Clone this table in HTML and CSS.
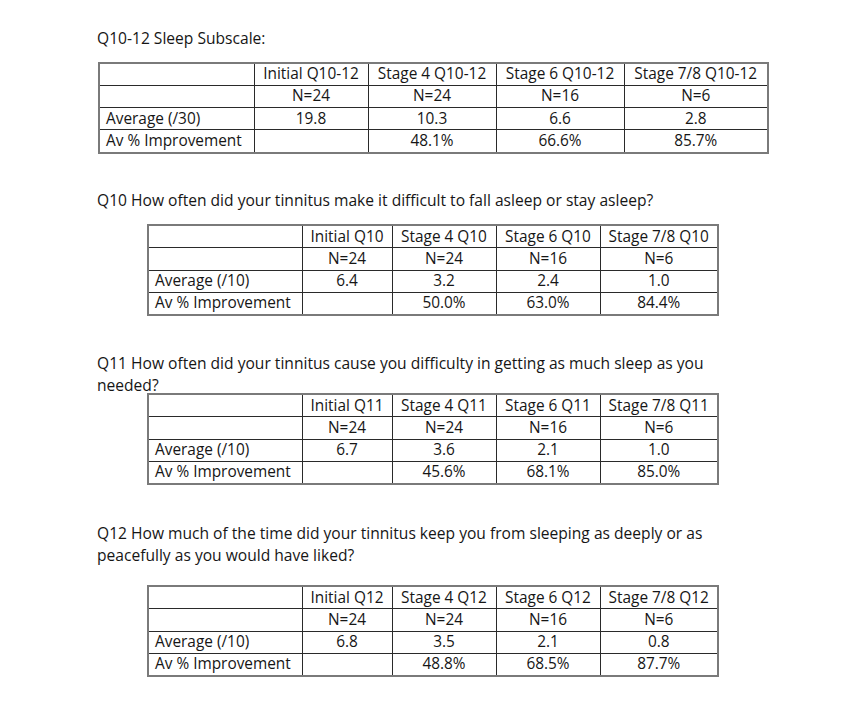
FILE: index.html
```html
<!DOCTYPE html>
<html lang="en">
<head>
<meta charset="utf-8">
<title>Sleep Subscale</title>
<link rel="stylesheet" href="styles.css">
</head>
<body>
<main class="doc">
  <p class="heading h-first">Q10-12 Sleep Subscale:</p>
  <table class="grid t-wide">
    <colgroup><col class="c1"><col class="c2"><col class="c3"><col class="c4"><col class="c5"></colgroup>
    <tr><td></td><td>Initial Q10-12</td><td>Stage 4 Q10-12</td><td>Stage 6 Q10-12</td><td>Stage 7/8 Q10-12</td></tr>
    <tr><td></td><td>N=24</td><td>N=24</td><td>N=16</td><td>N=6</td></tr>
    <tr><td class="lbl">Average (/30)</td><td>19.8</td><td>10.3</td><td>6.6</td><td>2.8</td></tr>
    <tr><td class="lbl">Av % Improvement</td><td></td><td>48.1%</td><td>66.6%</td><td>85.7%</td></tr>
  </table>

  <p class="heading h-q10">Q10 How often did your tinnitus make it difficult to fall asleep or stay asleep?</p>
  <table class="grid t-narrow">
    <colgroup><col class="c1"><col class="c2"><col class="c3"><col class="c4"><col class="c5"></colgroup>
    <tr><td></td><td>Initial Q10</td><td>Stage 4 Q10</td><td>Stage 6 Q10</td><td>Stage 7/8 Q10</td></tr>
    <tr><td></td><td>N=24</td><td>N=24</td><td>N=16</td><td>N=6</td></tr>
    <tr><td class="lbl">Average (/10)</td><td>6.4</td><td>3.2</td><td>2.4</td><td>1.0</td></tr>
    <tr><td class="lbl">Av % Improvement</td><td></td><td>50.0%</td><td>63.0%</td><td>84.4%</td></tr>
  </table>

  <p class="heading h-q11">Q11 How often did your tinnitus cause you difficulty in getting as much sleep as you<br>needed?</p>
  <table class="grid t-narrow">
    <colgroup><col class="c1"><col class="c2"><col class="c3"><col class="c4"><col class="c5"></colgroup>
    <tr><td></td><td>Initial Q11</td><td>Stage 4 Q11</td><td>Stage 6 Q11</td><td>Stage 7/8 Q11</td></tr>
    <tr><td></td><td>N=24</td><td>N=24</td><td>N=16</td><td>N=6</td></tr>
    <tr><td class="lbl">Average (/10)</td><td>6.7</td><td>3.6</td><td>2.1</td><td>1.0</td></tr>
    <tr><td class="lbl">Av % Improvement</td><td></td><td>45.6%</td><td>68.1%</td><td>85.0%</td></tr>
  </table>

  <p class="heading h-q12">Q12 How much of the time did your tinnitus keep you from sleeping as deeply or as<br>peacefully as you would have liked?</p>
  <table class="grid t-narrow">
    <colgroup><col class="c1"><col class="c2"><col class="c3"><col class="c4"><col class="c5"></colgroup>
    <tr><td></td><td>Initial Q12</td><td>Stage 4 Q12</td><td>Stage 6 Q12</td><td>Stage 7/8 Q12</td></tr>
    <tr><td></td><td>N=24</td><td>N=24</td><td>N=16</td><td>N=6</td></tr>
    <tr><td class="lbl">Average (/10)</td><td>6.8</td><td>3.5</td><td>2.1</td><td>0.8</td></tr>
    <tr><td class="lbl">Av % Improvement</td><td></td><td>48.8%</td><td>68.5%</td><td>87.7%</td></tr>
  </table>
</main>
</body>
</html>
```

FILE: styles.css
```css
html, body {
  margin: 0;
  padding: 0;
  background: #ffffff;
}

body {
  font-family: "Open Sans", "Noto Sans", "Liberation Sans", sans-serif;
  color: #161616;
}

.doc {
  padding: 28px 0 0 97px;
  width: 670px;
}

.heading {
  margin: 0;
  font-size: 15.6px;
  line-height: 21.5px;
  white-space: nowrap;
}

.h-first { margin-bottom: 12px; }
.h-q10 { margin-top: 36px; margin-bottom: 13px; }
.h-q11 { margin-top: 37px; margin-bottom: -3px; }
.h-q12 { margin-top: 38px; margin-bottom: 19px; }

.grid {
  border-collapse: collapse;
  table-layout: fixed;
  border: 2px solid #7a7a7a;
  font-size: 15.4px;
}

.grid td {
  border: 1px solid #2a2a2a;
  height: 21.25px;
  padding: 0 6px;
  line-height: 20px;
  text-align: center;
  white-space: nowrap;
  overflow: hidden;
}

.grid td.lbl {
  text-align: left;
}

.t-wide { margin-left: 1px; width: 669px; }
.t-wide .c1 { width: 155px; }
.t-wide .c2 { width: 114px; }
.t-wide .c3 { width: 128px; }
.t-wide .c4 { width: 128px; }
.t-wide .c5 { width: 144px; }

.t-narrow { margin-left: 50px; width: 570px; }
.t-narrow .c1 { width: 154px; }
.t-narrow .c2 { width: 90px; }
.t-narrow .c3 { width: 104px; }
.t-narrow .c4 { width: 104px; }
.t-narrow .c5 { width: 118px; }
```
